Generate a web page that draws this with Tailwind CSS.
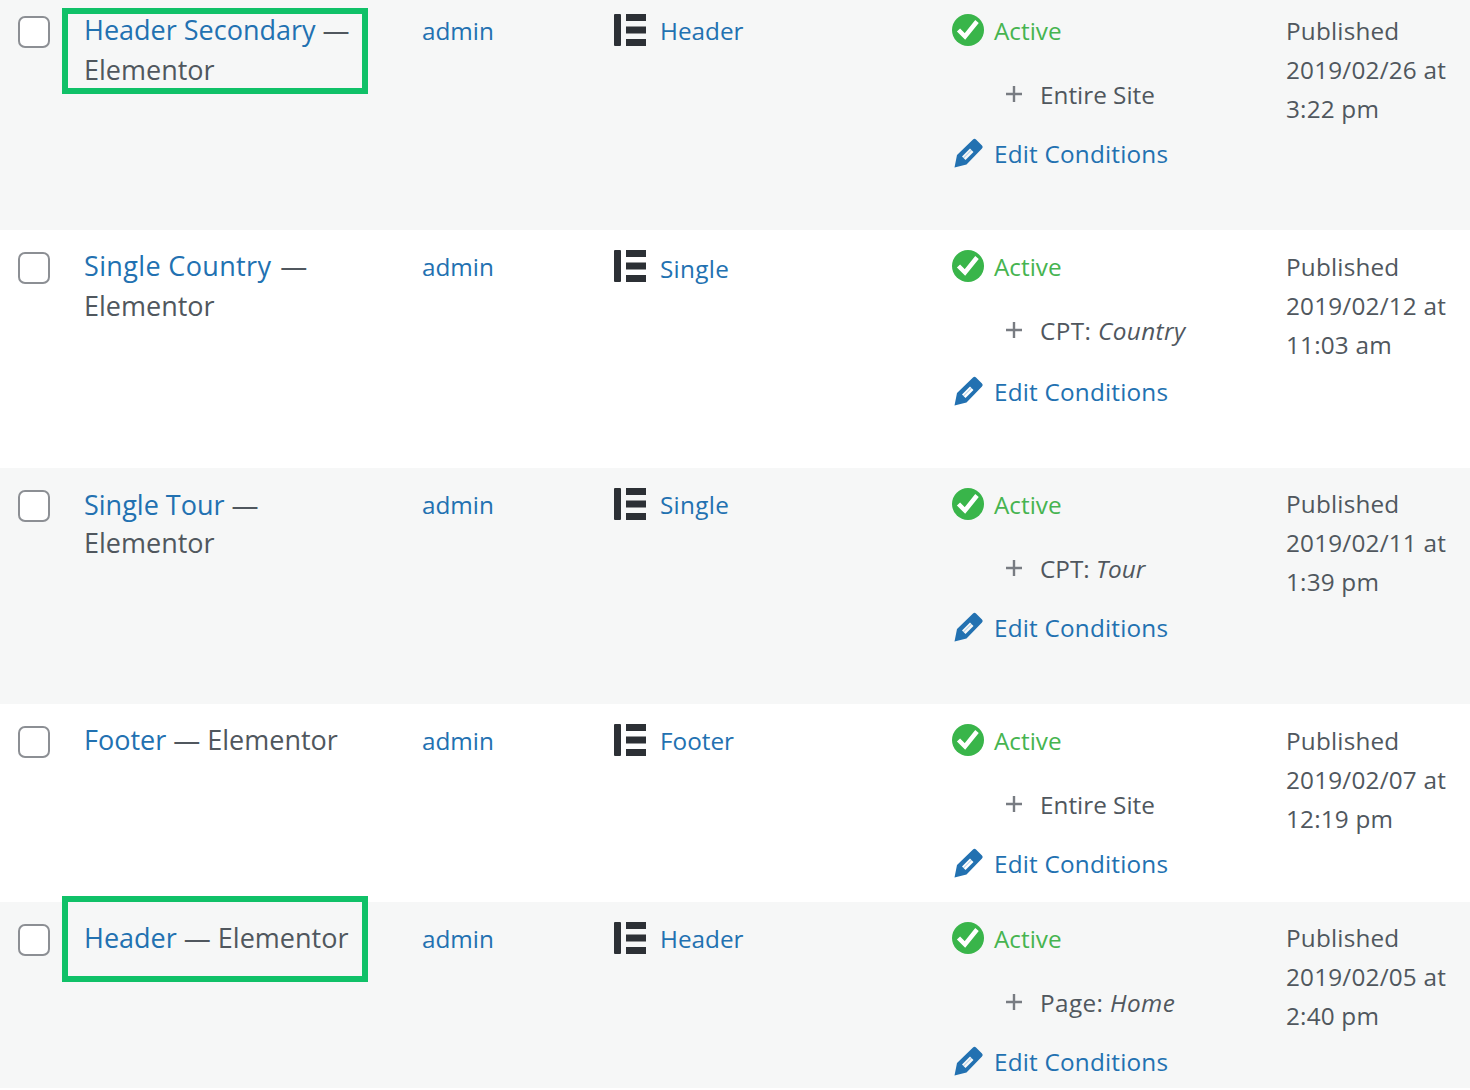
<!DOCTYPE html>
<html lang="en">
<head>
  <meta charset="UTF-8" />
  <title>Templates</title>
  <script src="https://cdn.jsdelivr.net/npm/@tailwindcss/browser@4"></script>
</head>
<body class="bg-white overflow-hidden font-['Open_Sans',sans-serif] text-[24.3px] leading-[39.5px] text-[#50575e]">
  <div class="-mt-[6px]">

    <!-- Header Secondary -->
    <div class="relative h-[236px] bg-[#f6f7f7] grid grid-cols-[84px_338px_192px_338px_334px_1fr] pt-[17px]">
      <div class="pl-[18px] pt-[5px]"><div class="w-[32px] h-[32px] bg-white border-2 border-[#8c8f94] rounded-[7px]"></div></div>
      <div class="w-[284px] -mt-[1px] text-[27px] leading-[40px]"><a class="text-[#2271b1]">Header Secondary</a> —<br>Elementor</div>
      <div class="text-[#2271b1]">admin</div>
      <div class="flex gap-[14px] items-start">
        <svg class="w-[32px] h-[32px] mt-[3px] text-[#2c3035]" viewBox="0 0 32 32" fill="currentColor"><rect x="0" y="0" width="7" height="32" rx="1"/><rect x="12" y="0" width="20" height="7"/><rect x="12" y="12.500" width="20" height="7"/><rect x="12" y="25" width="20" height="7"/></svg>
        <span class="text-[#2271b1]">Header</span>
      </div>
      <div>
        <div class="flex gap-[10px] text-[#46b450] items-start">
          <svg class="w-[32px] h-[32px] mt-[3px]" viewBox="0 0 32 32"><circle cx="16" cy="16" r="16" fill="#39b54a"/><path d="M6.500 16l6.500 6.500L25 7.500" fill="none" stroke="#fff" stroke-width="4.500"/></svg>
          Active
        </div>
        <div class="flex items-center pl-[54px] mt-[24px] gap-[18px]">
          <svg class="w-[16px] h-[16px]" viewBox="0 0 16 16"><path d="M6.800 0h2.400v6.800H16v2.400H9.200V16H6.800V9.200H0V6.800h6.800z" fill="#787c82"/></svg>
          <span>Entire Site</span>
        </div>
        <div class="flex gap-[10px] mt-[20px] text-[#2271b1] tracking-[0.2px] items-start">
          <svg class="w-[30px] h-[30px] mt-[4px] ml-[2px]" viewBox="0 0 30 30"><path d="M.5 29.500L3 17 19 1.500Q20.500 0 22 1.500L28 7.500Q29.500 9 28 10.500L12.500 26.500ZM8 18.500L16 10.500 19.500 14 11.500 22Z" fill="#2271b1" fill-rule="evenodd"/><path d="M9.500 20L17.500 12" stroke="#9cc3e0" stroke-width="1"/></svg>
          Edit Conditions
        </div>
      </div>
      <div class="tracking-[0.2px]"><span class="block leading-[40px]">Published</span><span class="block leading-[38px]">2019/02/26 at</span><span class="block leading-[40px]">3:22 pm</span></div>
      <div class="absolute left-[62px] top-[14px] w-[306px] h-[86px] border-[6px] border-[#10c168]"></div>
    </div>

    <!-- Single Country -->
    <div class="h-[238px] bg-white grid grid-cols-[84px_338px_192px_338px_334px_1fr] pt-[17px]">
      <div class="pl-[18px] pt-[5px]"><div class="w-[32px] h-[32px] bg-white border-2 border-[#8c8f94] rounded-[7px]"></div></div>
      <div class="w-[284px] -mt-[1px] text-[27px] leading-[40px]"><a class="text-[#2271b1] tracking-[0.35px]">Single Country</a> <span class="ml-[2px]">—</span><br>Elementor</div>
      <div class="text-[#2271b1]">admin</div>
      <div class="flex gap-[14px] items-start">
        <svg class="w-[32px] h-[32px] mt-[3px] text-[#2c3035]" viewBox="0 0 32 32" fill="currentColor"><rect x="0" y="0" width="7" height="32" rx="1"/><rect x="12" y="0" width="20" height="7"/><rect x="12" y="12.500" width="20" height="7"/><rect x="12" y="25" width="20" height="7"/></svg>
        <span class="text-[#2271b1] mt-[2px] tracking-[0.3px]">Single</span>
      </div>
      <div>
        <div class="flex gap-[10px] text-[#46b450] items-start">
          <svg class="w-[32px] h-[32px] mt-[3px]" viewBox="0 0 32 32"><circle cx="16" cy="16" r="16" fill="#39b54a"/><path d="M6.500 16l6.500 6.500L25 7.500" fill="none" stroke="#fff" stroke-width="4.500"/></svg>
          Active
        </div>
        <div class="flex items-center pl-[54px] mt-[24px] gap-[18px]">
          <svg class="w-[16px] h-[16px]" viewBox="0 0 16 16"><path d="M6.800 0h2.400v6.800H16v2.400H9.200V16H6.800V9.200H0V6.800h6.800z" fill="#787c82"/></svg>
          <span class="tracking-[0.4px]">CPT: <em>Country</em></span>
        </div>
        <div class="flex gap-[10px] mt-[22px] text-[#2271b1] tracking-[0.2px] items-start">
          <svg class="w-[30px] h-[30px] mt-[4px] ml-[2px]" viewBox="0 0 30 30"><path d="M.5 29.500L3 17 19 1.500Q20.500 0 22 1.500L28 7.500Q29.500 9 28 10.500L12.500 26.500ZM8 18.500L16 10.500 19.500 14 11.500 22Z" fill="#2271b1" fill-rule="evenodd"/><path d="M9.500 20L17.500 12" stroke="#9cc3e0" stroke-width="1"/></svg>
          Edit Conditions
        </div>
      </div>
      <div class="tracking-[0.2px]"><span class="block leading-[40px]">Published</span><span class="block leading-[38px]">2019/02/12 at</span><span class="block leading-[40px]">11:03 am</span></div>
    </div>

    <!-- Single Tour -->
    <div class="h-[236px] bg-[#f6f7f7] grid grid-cols-[84px_338px_192px_338px_334px_1fr] pt-[17px]">
      <div class="pl-[18px] pt-[5px]"><div class="w-[32px] h-[32px] bg-white border-2 border-[#8c8f94] rounded-[7px]"></div></div>
      <div class="w-[284px] mt-[1px] text-[27px] leading-[38px]"><a class="text-[#2271b1]">Single Tour</a> —<br>Elementor</div>
      <div class="text-[#2271b1]">admin</div>
      <div class="flex gap-[14px] items-start">
        <svg class="w-[32px] h-[32px] mt-[3px] text-[#2c3035]" viewBox="0 0 32 32" fill="currentColor"><rect x="0" y="0" width="7" height="32" rx="1"/><rect x="12" y="0" width="20" height="7"/><rect x="12" y="12.500" width="20" height="7"/><rect x="12" y="25" width="20" height="7"/></svg>
        <span class="text-[#2271b1] tracking-[0.3px]">Single</span>
      </div>
      <div>
        <div class="flex gap-[10px] text-[#46b450] items-start">
          <svg class="w-[32px] h-[32px] mt-[3px]" viewBox="0 0 32 32"><circle cx="16" cy="16" r="16" fill="#39b54a"/><path d="M6.500 16l6.500 6.500L25 7.500" fill="none" stroke="#fff" stroke-width="4.500"/></svg>
          Active
        </div>
        <div class="flex items-center pl-[54px] mt-[24px] gap-[18px]">
          <svg class="w-[16px] h-[16px]" viewBox="0 0 16 16"><path d="M6.800 0h2.400v6.800H16v2.400H9.200V16H6.800V9.200H0V6.800h6.800z" fill="#787c82"/></svg>
          <span>CPT: <em>Tour</em></span>
        </div>
        <div class="flex gap-[10px] mt-[20px] text-[#2271b1] tracking-[0.2px] items-start">
          <svg class="w-[30px] h-[30px] mt-[4px] ml-[2px]" viewBox="0 0 30 30"><path d="M.5 29.500L3 17 19 1.500Q20.500 0 22 1.500L28 7.500Q29.500 9 28 10.500L12.500 26.500ZM8 18.500L16 10.500 19.500 14 11.500 22Z" fill="#2271b1" fill-rule="evenodd"/><path d="M9.500 20L17.500 12" stroke="#9cc3e0" stroke-width="1"/></svg>
          Edit Conditions
        </div>
      </div>
      <div class="tracking-[0.2px]"><span class="block leading-[38px]">Published</span><span class="block leading-[40px]">2019/02/11 at</span><span class="block leading-[38px]">1:39 pm</span></div>
    </div>

    <!-- Footer -->
    <div class="h-[198px] bg-white grid grid-cols-[84px_338px_192px_338px_334px_1fr] pt-[17px]">
      <div class="pl-[18px] pt-[5px]"><div class="w-[32px] h-[32px] bg-white border-2 border-[#8c8f94] rounded-[7px]"></div></div>
      <div class="w-[284px] -mt-[1px] text-[27px] leading-[40px]"><a class="text-[#2271b1]">Footer</a> — Elementor</div>
      <div class="text-[#2271b1]">admin</div>
      <div class="flex gap-[14px] items-start">
        <svg class="w-[32px] h-[32px] mt-[3px] text-[#2c3035]" viewBox="0 0 32 32" fill="currentColor"><rect x="0" y="0" width="7" height="32" rx="1"/><rect x="12" y="0" width="20" height="7"/><rect x="12" y="12.500" width="20" height="7"/><rect x="12" y="25" width="20" height="7"/></svg>
        <span class="text-[#2271b1]">Footer</span>
      </div>
      <div>
        <div class="flex gap-[10px] text-[#46b450] items-start">
          <svg class="w-[32px] h-[32px] mt-[3px]" viewBox="0 0 32 32"><circle cx="16" cy="16" r="16" fill="#39b54a"/><path d="M6.500 16l6.500 6.500L25 7.500" fill="none" stroke="#fff" stroke-width="4.500"/></svg>
          Active
        </div>
        <div class="flex items-center pl-[54px] mt-[24px] gap-[18px]">
          <svg class="w-[16px] h-[16px]" viewBox="0 0 16 16"><path d="M6.800 0h2.400v6.800H16v2.400H9.200V16H6.800V9.200H0V6.800h6.800z" fill="#787c82"/></svg>
          <span>Entire Site</span>
        </div>
        <div class="flex gap-[10px] mt-[20px] text-[#2271b1] tracking-[0.2px] items-start">
          <svg class="w-[30px] h-[30px] mt-[4px] ml-[2px]" viewBox="0 0 30 30"><path d="M.5 29.500L3 17 19 1.500Q20.500 0 22 1.500L28 7.500Q29.500 9 28 10.500L12.500 26.500ZM8 18.500L16 10.500 19.500 14 11.500 22Z" fill="#2271b1" fill-rule="evenodd"/><path d="M9.500 20L17.500 12" stroke="#9cc3e0" stroke-width="1"/></svg>
          Edit Conditions
        </div>
      </div>
      <div class="tracking-[0.2px]"><span class="block leading-[40px]">Published</span><span class="block leading-[38px]">2019/02/07 at</span><span class="block leading-[40px]">12:19 pm</span></div>
    </div>

    <!-- Header -->
    <div class="relative h-[186px] bg-[#f6f7f7] grid grid-cols-[84px_338px_192px_338px_334px_1fr] pt-[17px]">
      <div class="pl-[18px] pt-[5px]"><div class="w-[32px] h-[32px] bg-white border-2 border-[#8c8f94] rounded-[7px]"></div></div>
      <div class="w-[284px] -mt-[1px] text-[27px] leading-[40px]"><a class="text-[#2271b1]">Header</a> — Elementor</div>
      <div class="text-[#2271b1]">admin</div>
      <div class="flex gap-[14px] items-start">
        <svg class="w-[32px] h-[32px] mt-[3px] text-[#2c3035]" viewBox="0 0 32 32" fill="currentColor"><rect x="0" y="0" width="7" height="32" rx="1"/><rect x="12" y="0" width="20" height="7"/><rect x="12" y="12.500" width="20" height="7"/><rect x="12" y="25" width="20" height="7"/></svg>
        <span class="text-[#2271b1]">Header</span>
      </div>
      <div>
        <div class="flex gap-[10px] text-[#46b450] items-start">
          <svg class="w-[32px] h-[32px] mt-[3px]" viewBox="0 0 32 32"><circle cx="16" cy="16" r="16" fill="#39b54a"/><path d="M6.500 16l6.500 6.500L25 7.500" fill="none" stroke="#fff" stroke-width="4.500"/></svg>
          Active
        </div>
        <div class="flex items-center pl-[54px] mt-[24px] gap-[18px]">
          <svg class="w-[16px] h-[16px]" viewBox="0 0 16 16"><path d="M6.800 0h2.400v6.800H16v2.400H9.200V16H6.800V9.200H0V6.800h6.800z" fill="#787c82"/></svg>
          <span class="tracking-[0.4px]">Page: <em>Home</em></span>
        </div>
        <div class="flex gap-[10px] mt-[20px] text-[#2271b1] tracking-[0.2px] items-start">
          <svg class="w-[30px] h-[30px] mt-[4px] ml-[2px]" viewBox="0 0 30 30"><path d="M.5 29.500L3 17 19 1.500Q20.500 0 22 1.500L28 7.500Q29.500 9 28 10.500L12.500 26.500ZM8 18.500L16 10.500 19.500 14 11.500 22Z" fill="#2271b1" fill-rule="evenodd"/><path d="M9.500 20L17.500 12" stroke="#9cc3e0" stroke-width="1"/></svg>
          Edit Conditions
        </div>
      </div>
      <div class="tracking-[0.2px]"><span class="block leading-[38px]">Published</span><span class="block leading-[40px]">2019/02/05 at</span><span class="block leading-[38px]">2:40 pm</span></div>
      <div class="absolute left-[62px] top-[-6px] w-[306px] h-[86px] border-[6px] border-[#10c168]"></div>
    </div>

  </div>
</body>
</html>
